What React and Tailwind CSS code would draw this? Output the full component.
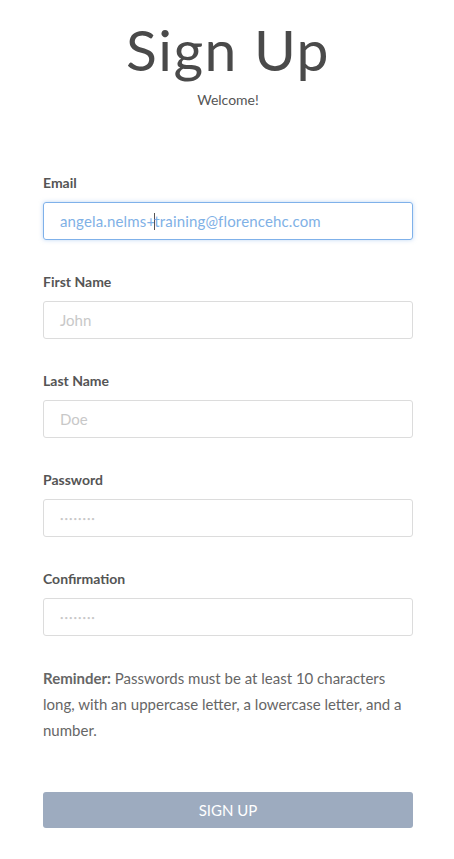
export default function App() {
  const fields = [
    { label: 'First Name', placeholder: 'John', type: 'text' },
    { label: 'Last Name', placeholder: 'Doe', type: 'text' },
    { label: 'Password', placeholder: '••••••••', type: 'password' },
    { label: 'Confirmation', placeholder: '••••••••', type: 'password' },
  ];

  return (
    <div
      className="w-[454px] min-h-[859px] bg-white pl-[43px] pr-[41px] text-[#555]"
      style={{ fontFamily: 'Lato, "Open Sans", sans-serif' }}
    >
      <div className="flex flex-col items-center pt-[17px]">
        <h1 className="text-[57px] leading-[64px] tracking-[1.5px] font-normal text-[#4a4a4a]">Sign Up</h1>
        <p className="mt-[9px] text-[14px] leading-[20px] text-[#555]">Welcome!</p>
      </div>

      <form className="mt-[63px]" onSubmit={(e) => e.preventDefault()}>
        <div className="mb-[32px]">
          <label className="block mb-[9px] text-[14px] leading-[20px] font-bold text-[#555]">Email</label>
          <div className="h-[38px] rounded-[3px] border border-[#7fb1ea] shadow-[0_0_4px_rgba(127,177,234,0.5)] flex items-center pl-[16px] text-[15px] tracking-[0.15px] text-[#7fb1e6]">
            angela.nelms+<span className="w-px h-[17px] bg-[#555] -mx-px"></span>training@florencehc.com
          </div>
        </div>

        {fields.map((f) => (
          <div key={f.label} className="mb-[32px]">
            <label className="block mb-[9px] text-[14px] leading-[20px] font-bold text-[#555]">{f.label}</label>
            <div className="h-[38px] rounded-[3px] border border-[#dcdcdc] flex items-center pl-[16px] text-[15px] text-[#c8c8c8]">
              {f.type === 'password' ? (
                <span className="text-[6px] tracking-[1px]">{f.placeholder}</span>
              ) : (
                f.placeholder
              )}
            </div>
          </div>
        ))}

        <p className="-mt-[3px] text-[15px] leading-[26px] text-[#666]">
          <strong className="font-bold">Reminder:</strong> Passwords must be at least 10 characters long, with an uppercase letter, a lowercase letter, and a number.
        </p>

        <button
          type="submit"
          className="mt-[49px] w-full h-[36px] rounded-[3px] bg-[#9dabbf] text-white text-[15px] uppercase"
        >
          Sign Up
        </button>
      </form>
    </div>
  );
}
